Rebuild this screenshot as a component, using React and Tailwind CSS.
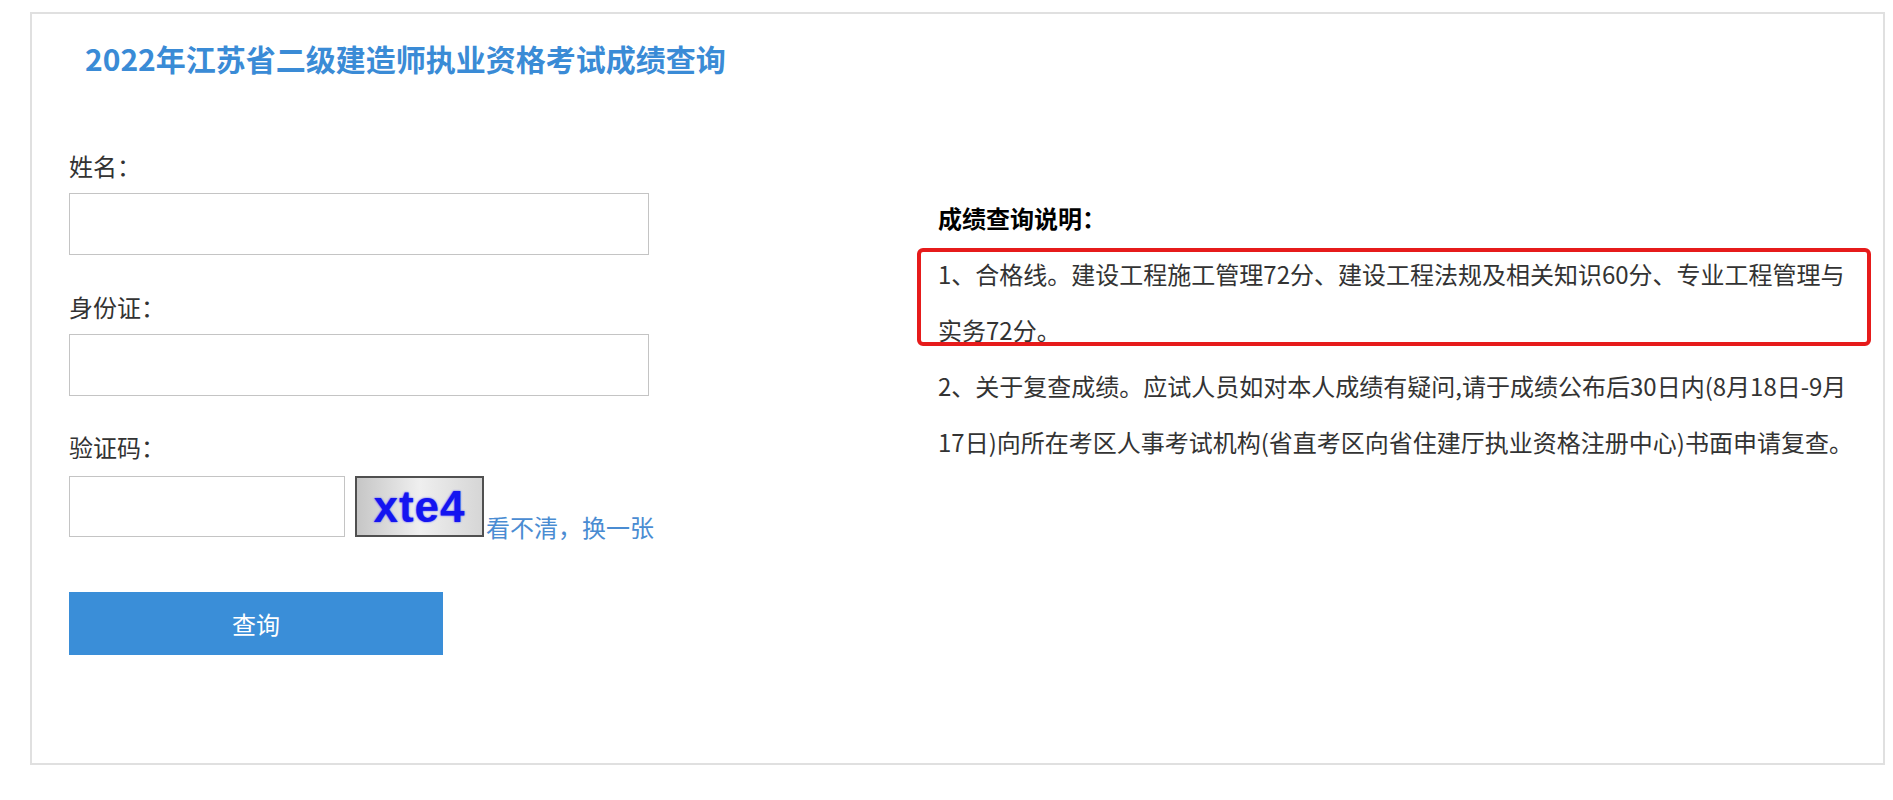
export default function App() {
  return (
    <div className="min-h-screen bg-white pt-[12px] pl-[30px] font-['Noto_Sans_CJK_SC','Noto_Sans',sans-serif] text-[#333]">
      <div className="h-[753px] w-[1855px] border-2 border-[#e0e0e0] bg-white pt-[24px] pl-[37px]">
        <h1 className="pl-[16px] text-[30px] leading-[40px] font-bold text-[#3a8bd6]">
          2022年江苏省二级建造师执业资格考试成绩查询
        </h1>

        <div className="mt-[70px] flex">
          {/* form */}
          <form className="w-[580px] shrink-0 text-[24px]">
            <label className="block leading-[36px]">姓名：</label>
            <input className="mt-[9px] block h-[62px] w-[580px] border border-[#c4c4c4] bg-white px-2 outline-none" />

            <label className="mt-[34px] block leading-[36px]">身份证：</label>
            <input className="mt-[9px] block h-[62px] w-[580px] border border-[#c4c4c4] bg-white px-2 outline-none" />

            <label className="mt-[33px] block leading-[36px]">验证码：</label>
            <div className="mt-[11px] flex items-end">
              <input className="block h-[61px] w-[276px] shrink-0 border border-[#c4c4c4] bg-white px-2 outline-none" />
              <div className="ml-[10px] flex h-[61px] w-[129px] shrink-0 items-center justify-center border-2 border-[#505050] bg-gradient-to-r from-[#c6c6c6] via-[#efefef] to-[#d6d6d6]">
                <span className="font-['Liberation_Sans',sans-serif] text-[44px] leading-none font-bold tracking-[1px] text-[#1414f0] [text-shadow:0_0_2px_#3a3aff]">
                  xte4
                </span>
              </div>
              <a className="-mb-[4px] ml-[2px] shrink-0 whitespace-nowrap leading-[28px] text-[#4a8cd2]">看不清，换一张</a>
            </div>

            <button
              type="button"
              className="mt-[55px] block h-[63px] w-[374px] bg-[#3a8ed8] text-[24px] text-white"
            >
              查询
            </button>
          </form>

          {/* notes */}
          <div className="ml-[289px] mt-[42px] w-[920px] text-[24px] leading-[56px]">
            <div className="font-bold text-black">成绩查询说明：</div>
            <p className="relative">
              1、合格线。建设工程施工管理72分、建设工程法规及相关知识60分、专业工程管理与实务72分。
              <span className="pointer-events-none absolute -left-[21px] top-[2px] -right-[13px] bottom-[12px] rounded-[6px] border-4 border-[#e61b1b]" />
            </p>
            <p>
              2、关于复查成绩。应试人员如对本人成绩有疑问,请于成绩公布后30日内(8月18日-9月17日)向所在考区人事考试机构(省直考区向省住建厅执业资格注册中心)书面申请复查。
            </p>
          </div>
        </div>
      </div>
    </div>
  );
}
